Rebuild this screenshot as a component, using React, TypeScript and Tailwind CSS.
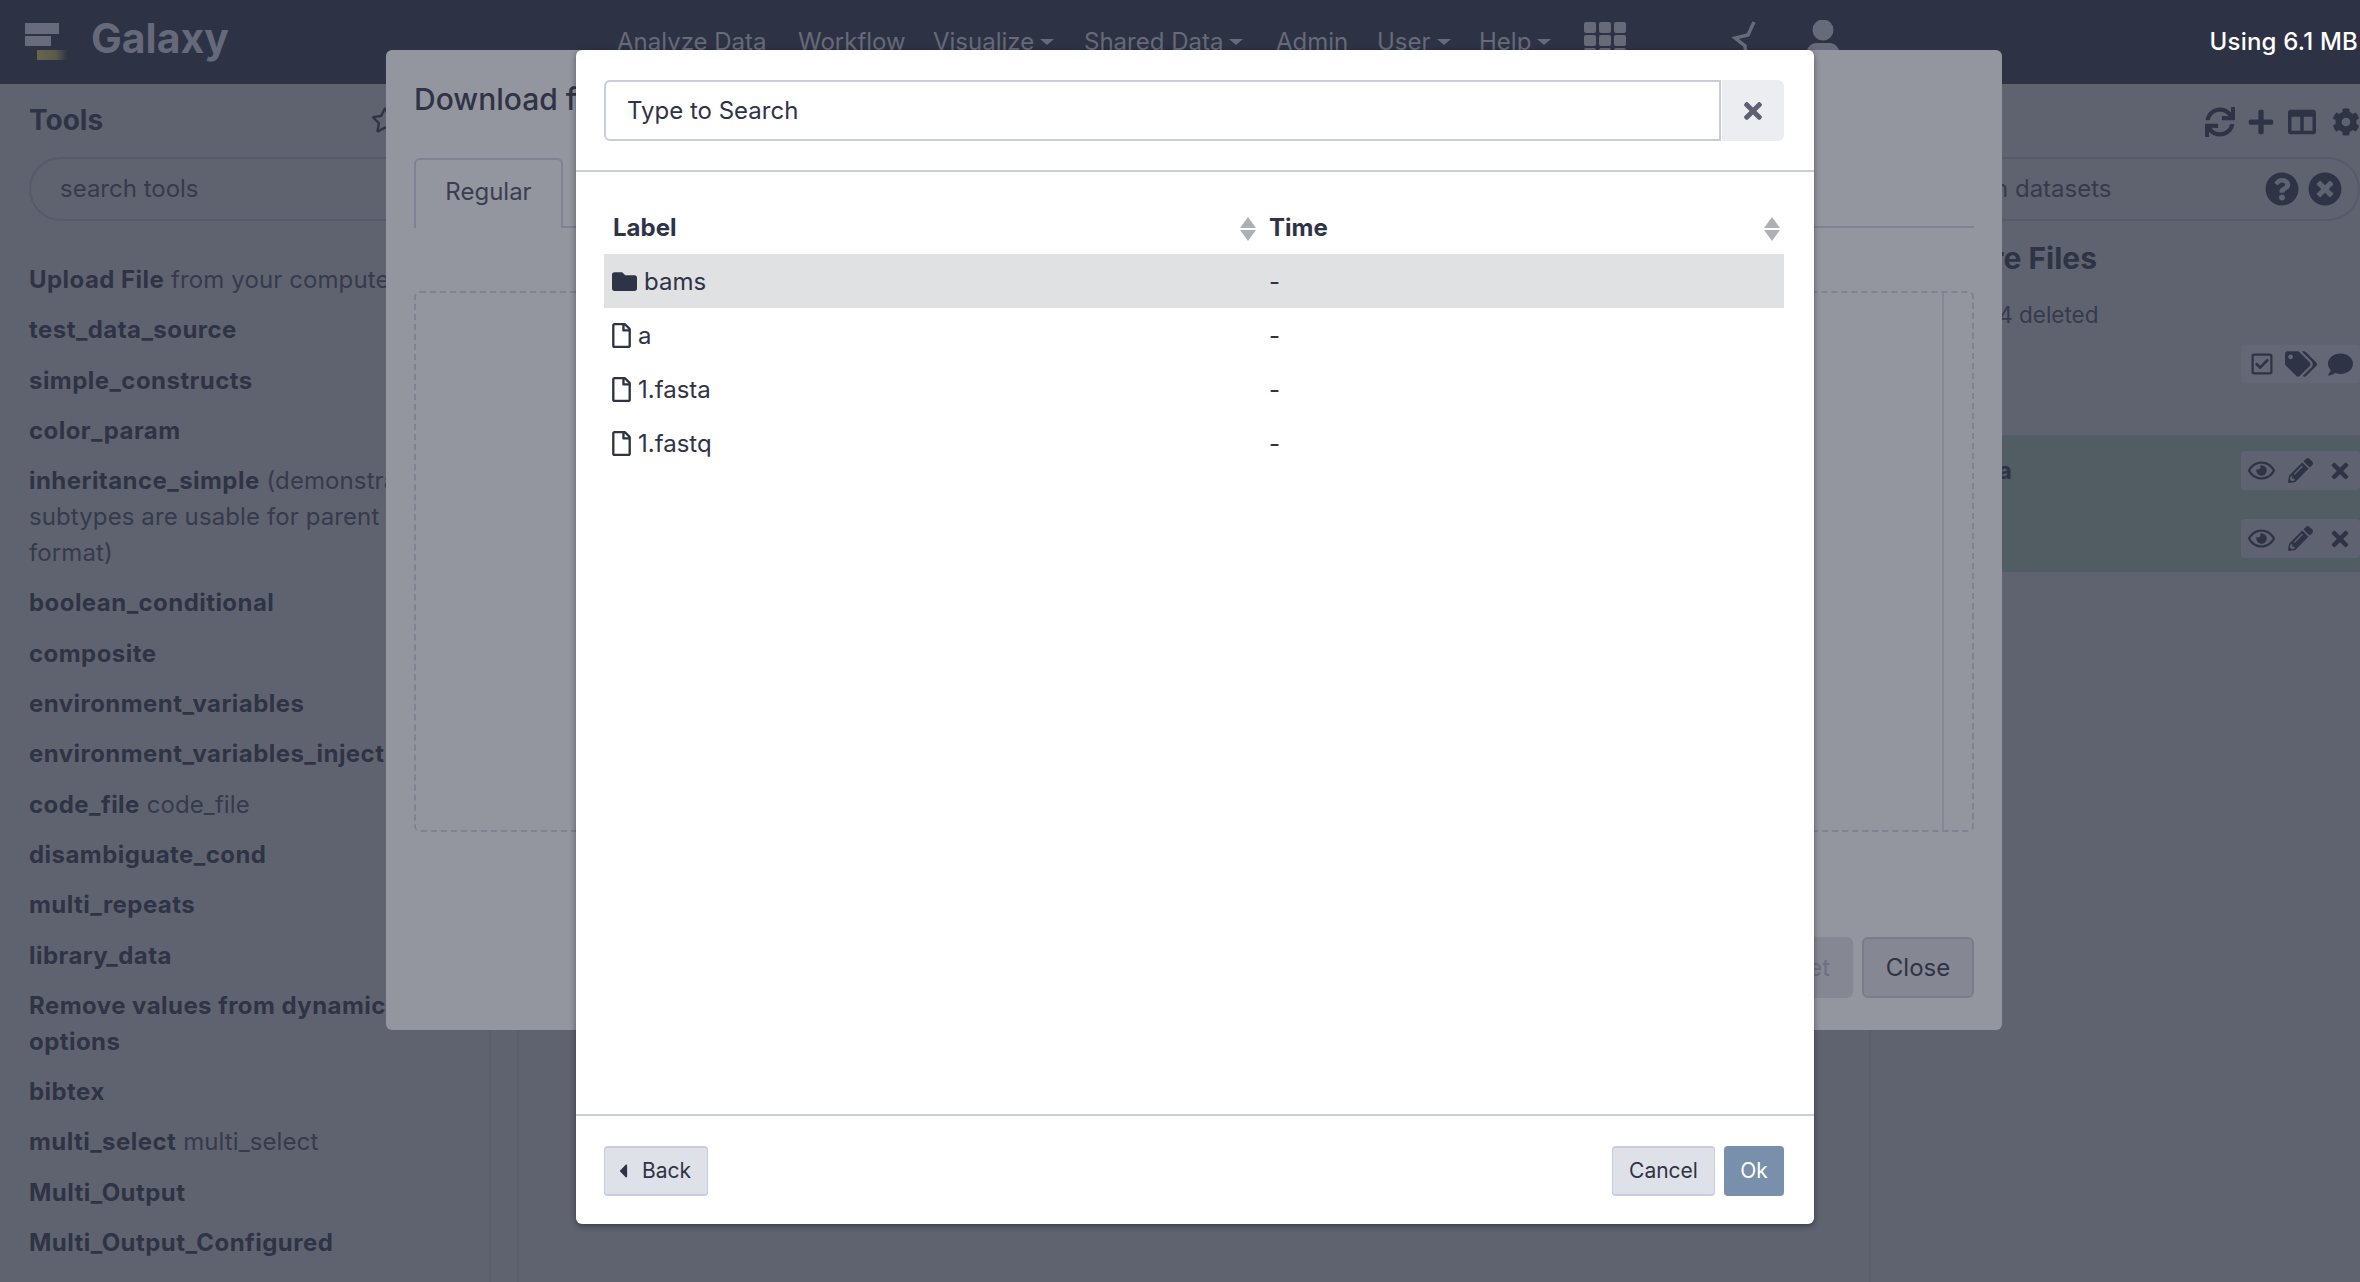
import { FaCog, FaColumns, FaComment, FaRegEye, FaFolder, FaPencilAlt, FaPlus, FaQuestionCircle, FaRegCheckSquare, FaRegFile, FaRegStar, FaSync, FaTags, FaTimes, FaTimesCircle, FaCaretLeft } from 'react-icons/fa';

type Tool = { name: string; desc?: string };

const tools: Tool[] = [
  { name: 'Upload File', desc: 'from your computer' },
  { name: 'test_data_source' },
  { name: 'simple_constructs' },
  { name: 'color_param' },
  { name: 'inheritance_simple', desc: '(demonstrates that\nsubtypes are usable for parent\nformat)' },
  { name: 'boolean_conditional' },
  { name: 'composite' },
  { name: 'environment_variables' },
  { name: 'environment_variables_inject' },
  { name: 'code_file', desc: 'code_file' },
  { name: 'disambiguate_cond' },
  { name: 'multi_repeats' },
  { name: 'library_data' },
  { name: 'Remove values from dynamic\noptions' },
  { name: 'bibtex' },
  { name: 'multi_select', desc: 'multi_select' },
  { name: 'Multi_Output' },
  { name: 'Multi_Output_Configured' },
];

const navItems = [
  { label: 'Analyze Data', w: 'w-[181px]' },
  { label: 'Workflow', w: 'w-[135px]' },
  { label: 'Visualize', caret: true, w: 'w-[151px]' },
  { label: 'Shared Data', caret: true, w: 'w-[192px]' },
  { label: 'Admin', w: 'w-[101px]' },
  { label: 'User', caret: true, w: 'w-[102px]' },
  { label: 'Help', caret: true, w: 'w-[104px]' },
];

const rows = [
  { label: 'bams', folder: true },
  { label: 'a' },
  { label: '1.fasta' },
  { label: '1.fastq' },
];

function SortArrows() {
  return (
    <svg width="16" height="24" viewBox="0 0 16 24" className="shrink-0">
      <path d="M8 0 16 11H0Z" fill="#adb0b3" />
      <path d="M8 24 16 13H0Z" fill="#adb0b3" />
    </svg>
  );
}

function GalaxyLogo() {
  return (
    <svg width="44" height="38" viewBox="0 0 44 38" className="shrink-0 blur-[0.7px]">
      <defs>
        <linearGradient id="logoFade" x1="0" x2="1" y1="0" y2="0">
          <stop offset="0" stopColor="#66654c" />
          <stop offset="0.6" stopColor="#5a5a4c" />
          <stop offset="1" stopColor="#2e3245" />
        </linearGradient>
      </defs>
      <rect x="0" y="0" width="34" height="11" fill="#676b7c" />
      <rect x="0" y="13" width="26" height="10" fill="#676b7c" />
      <rect x="12" y="27" width="31" height="10" fill="url(#logoFade)" />
    </svg>
  );
}

function GridIcon() {
  return (
    <svg width="42" height="38" viewBox="0 0 42 38" fill="#666a79" className="shrink-0">
      {[0, 13, 26].map((y) =>
        [0, 15, 30].map((x) => <rect key={`${x}-${y}`} x={x} y={y} width="12" height="11" rx="2" />)
      )}
    </svg>
  );
}

function ForkIcon() {
  return (
    <svg width="26" height="36" viewBox="0 0 26 36" fill="none" stroke="#666a79" strokeWidth="3.5" className="shrink-0">
      <path d="M22 2 16 15 3 18 13 26 14 36" />
    </svg>
  );
}

function UserIcon() {
  return (
    <svg width="36" height="40" viewBox="0 0 36 40" fill="#666a79" className="shrink-0">
      <circle cx="18" cy="10" r="10.5" />
      <path d="M1 36c0-8 5-13 10-13h14c5 0 10 5 10 13v4H1Z" />
    </svg>
  );
}

function ItemActions() {
  return (
    <span className="flex h-[39px] w-[119px] items-center rounded-[4px] bg-[#5f6371] pl-[7px]">
      <FaRegEye size={27} />
      <FaPencilAlt size={25} className="ml-[13px]" />
      <FaTimes size={24} className="ml-[15px]" />
    </span>
  );
}

export default function App() {
  return (
    <div className="relative w-[2360px] h-[1282px] overflow-hidden bg-[#5f636f] text-[24px] leading-[36px] text-[#2f3346] font-['Inter',sans-serif]">
      <header className="flex h-[84px] items-start bg-[#2e3245]">
        <div className="flex w-[617px] items-start pl-[25px] pt-[23px]">
          <GalaxyLogo />
          <span className="ml-[22px] mt-[-7px] text-[41px] leading-[44px] font-bold text-[#656979]">Galaxy</span>
        </div>
        <nav className="flex pt-[24px] text-[#666a79]">
          {navItems.map((n) => (
            <span key={n.label} className={`flex items-center whitespace-nowrap ${n.w}`}>
              {n.label}
              {n.caret && <span className="ml-[6px] h-0 w-0 border-x-[7px] border-t-[6px] border-x-transparent border-t-[#666a79]" />}
            </span>
          ))}
        </nav>
        <div className="flex flex-1 items-start pt-[20px]">
          <div className="ml-[1px] mt-[2px]"><GridIcon /></div>
          <div className="ml-[106px]">
            <ForkIcon />
          </div>
          <div className="ml-[47px]"><UserIcon /></div>
          <span className="ml-auto mt-[4px] mr-[2px] whitespace-nowrap font-medium tracking-[0.2px] text-white">Using 6.1 MB</span>
        </div>
      </header>

      <main className="flex h-[1198px]">
        <aside className="w-[491px] shrink-0 border-r-2 border-[#5a5e6a] pl-[29px]">
          <div className="flex h-[71px] items-center justify-between pr-[90px]">
            <span className="text-[28px] font-bold">Tools</span>
            <FaRegStar size={28} />
          </div>
          <div className="mt-[2px] flex h-[64px] w-[500px] items-center rounded-full border-2 border-[#565a6a] pl-[29px] text-[#363a4d]">search tools</div>
          <ul className="mt-[41px] w-[470px]">
            {tools.map((t) => (
              <li key={t.name} className="mb-[14.3px] whitespace-pre-line">
                <span className="font-bold tracking-[0.45px]">{t.name}</span>
                {t.desc && <span className="font-normal tracking-[0.1px] text-[#363a4d]"> {t.desc}</span>}
              </li>
            ))}
          </ul>
        </aside>
        <div className="w-[26px] shrink-0" />
        <section className="w-[1354px] shrink-0 border-x-2 border-[#5a5e6a]" />
        <aside className="flex-1 pl-[128px]">
          <div className="flex h-[73px] items-center justify-end pt-[2px] text-[#2f3346]">
            <FaSync size={30} />
            <FaPlus size={28} className="ml-[12px]" />
            <FaColumns size={28} className="ml-[13px]" />
            <FaCog size={28} className="ml-[16px]" />
          </div>
          <div className="ml-[-128px] flex h-[64px] items-center justify-end gap-[9px] rounded-r-full border-2 border-l-0 border-[#565a6a] pr-[16px]">
            <span className="mr-auto pl-[123px] text-[#363a4d]">n datasets</span>
            <FaQuestionCircle size={34} />
            <FaTimesCircle size={34} />
          </div>
          <div className="ml-[-128px] pl-[121px] pt-[19px] text-[30px] font-bold">re Files</div>
          <div className="ml-[-128px] pl-[118px] pt-[21px] text-[22.5px] text-[#363a4d]">14 deleted</div>
          <div className="mt-[12px] ml-auto flex h-[38px] w-[119px] items-center rounded-[4px] bg-[#646876] pl-[9px] text-[#2f3346]">
            <FaRegCheckSquare size={24} />
            <FaTags size={32} className="ml-[11px]" />
            <FaComment size={25} className="ml-[11px]" />
          </div>
          <div className="ml-[-128px] mt-[52px] h-[137px] border-t-2 border-[#585a6c] bg-[#525d63] pt-[14px]">
            <div className="relative flex h-[39px] items-center justify-end">
              <span className="absolute left-[118px] font-bold">ta</span>
              <ItemActions />
            </div>
            <div className="mt-[29px] flex h-[39px] items-center justify-end">
              <ItemActions />
            </div>
          </div>
        </aside>
      </main>

      {/* upload dialog, dimmed by the backdrop */}
      <div className="absolute left-[386px] top-[50px] flex h-[980px] w-[1616px] flex-col rounded-[6px] bg-[#93969f] px-[28px]">
        <div className="pt-[29px] text-[30px] leading-[40px] font-medium">Download from URL or upload files</div>
        <div className="mt-[39px] flex border-b-2 border-[#7f8290]">
          <span className="mb-[-2px] flex h-[70px] w-[149px] items-center justify-center rounded-t-[6px] border-2 border-b-0 border-[#7f8290] bg-[#93969f] pb-[4px] text-[#3a3e50]">Regular</span>
        </div>
        <div className="relative mt-[63px] h-[541px] rounded-[6px] border-2 border-dashed border-[#7f8290]">
          <div className="absolute right-[28px] top-0 h-full border-l-2 border-[#858894]" />
        </div>
        <div className="mt-[105px] flex justify-end gap-[9px]">
          <span className="flex h-[61px] items-center justify-center rounded-[6px] bg-[#858793] px-[23px] text-[#6d7080]">Reset</span>
          <span className="flex h-[61px] w-[112px] items-center justify-center rounded-[6px] border-2 border-[#7a7c8a] bg-[#858793]">Close</span>
        </div>
      </div>

      {/* file picker on top */}
      <div className="absolute left-[576px] top-[50px] flex h-[1174px] w-[1238px] flex-col rounded-[6px] bg-white shadow-[0_2px_6px_rgba(0,0,0,0.4)]">
        <div className="flex h-[122px] shrink-0 items-start border-b-2 border-[#c8ccdb] pl-[28px] pr-[30px] pt-[30px]">
          <div className="flex h-[61px] flex-1 items-center rounded-l-[6px] border-2 border-[#c8ccdb] pl-[21px] text-[#2f3346]">Type to Search</div>
          <div className="ml-[1px] flex h-[61px] w-[62px] items-center justify-center rounded-r-[6px] bg-[#ebedf1] text-[#5b6072]">
            <FaTimes size={26} />
          </div>
        </div>
        <div className="flex-1 pl-[28px] pr-[30px] pt-[30px]">
          <table className="w-full table-fixed border-collapse">
            <thead>
              <tr className="h-[52px] text-left">
                <th className="relative w-[648px] pl-[9px] font-bold">
                  Label
                  <span className="absolute right-[-4px] top-[15px]"><SortArrows /></span>
                </th>
                <th className="relative pl-[17px] font-bold">
                  Time
                  <span className="absolute right-[4px] top-[15px]"><SortArrows /></span>
                </th>
              </tr>
            </thead>
            <tbody>
              {rows.map((r) => (
                <tr key={r.label} className={`h-[54px] ${r.folder ? 'bg-[#e0e1e3]' : ''}`}>
                  <td className="pl-[8px] pt-[1px]">
                    <span className="flex items-center">
                      {r.folder ? <FaFolder size={25} /> : <FaRegFile className="h-[25px] w-[19px]" />}
                      <span className="ml-[7px]">{r.label}</span>
                    </span>
                  </td>
                  <td className="pl-[17px] pt-[1px]">-</td>
                </tr>
              ))}
            </tbody>
          </table>
        </div>
        <div className="flex h-[110px] shrink-0 items-start justify-between border-t-2 border-[#c8ccdb] pl-[28px] pr-[30px] pt-[30px] text-[21px]">
          <span className="flex h-[50px] w-[104px] items-center gap-[8px] rounded-[4px] border-y-2 border-x border-[#c8ccdb] bg-[#dee2e8] pl-[7px]">
            <FaCaretLeft size={22} />
            Back
          </span>
          <div className="flex gap-[9px]">
            <span className="flex h-[50px] w-[103px] items-center justify-center rounded-[4px] border-y-2 border-x border-[#c8ccdb] bg-[#dee2e8]">Cancel</span>
            <span className="flex h-[50px] w-[60px] items-center justify-center rounded-[4px] bg-[#7890ab] text-white">Ok</span>
          </div>
        </div>
      </div>
    </div>
  );
}
